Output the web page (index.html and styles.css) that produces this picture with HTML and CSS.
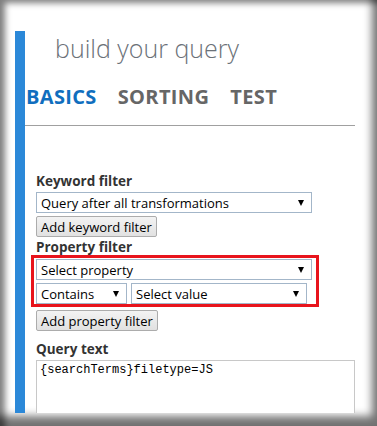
FILE: index.html
```html
<!DOCTYPE html>
<html lang="en">
<head>
    <meta charset="UTF-8">
    <meta name="viewport" content="width=device-width, initial-scale=1.0">
    <title>Build your query</title>
    <link rel="stylesheet" href="styles.css">
</head>
<body>
    <div class="frame">
        <div class="panel">
            <h1 class="title">build your query</h1>

            <!-- tabs of the query builder -->
            <div class="tabs">
                <span class="tab active">BASICS</span>
                <span class="tab">SORTING</span>
                <span class="tab">TEST</span>
            </div>
            <hr class="divider">

            <div class="form">
                <label class="label">Keyword filter</label>
                <div class="select wide">Query after all transformations<span class="arrow"></span></div>
                <button class="btn">Add keyword filter</button>

                <label class="label label-after">Property filter</label>
                <div class="highlight">
                    <div class="select wide">Select property<span class="arrow"></span></div>
                    <div class="row">
                        <div class="select operator">Contains<span class="arrow"></span></div>
                        <div class="select value">Select value<span class="arrow"></span></div>
                    </div>
                </div>
                <button class="btn">Add property filter</button>

                <label class="label label-query">Query text</label>
                <textarea class="query">{searchTerms}filetype=JS</textarea>
            </div>
        </div>
    </div>
</body>
</html>
```

FILE: styles.css
```css
body {
    margin: 0;
    padding: 0;
    font-family: "Open Sans", Arial, sans-serif;
    background-color: #fff;
}
.frame {
    width: 377px;
    height: 426px;
    box-sizing: border-box;
    padding: 31px 0 0 15px;
    background-color: #fff;
    overflow: hidden;
    box-shadow: inset 6px 4px 6px -1px rgba(0, 0, 0, 0.5),
                inset -7px -12px 8px -2px rgba(0, 0, 0, 0.55);
}
.panel {
    height: 382px;
    border-left: 10px solid #2b88d8;
    overflow: hidden;
}
.title {
    margin: 2px 0 0 30px;
    font-size: 25px;
    font-weight: 300;
    line-height: 30px;
    color: #6b7178;
}
.tabs {
    display: flex;
    margin-top: 22px;
    padding-left: 1px;
    line-height: 24px;
}
.tab {
    font-size: 20px;
    font-weight: bold;
    letter-spacing: 0.35px;
    color: #666;
    margin-right: 21px;
}
.tab.active {
    color: #106ebe;
}
.divider {
    width: 330px;
    margin: 16px 0 0 0;
    border: 0;
    border-top: 1px solid #a0a0a0;
}
.form {
    margin-left: 11px;
}
.label {
    display: block;
    margin-top: 47px;
    font-size: 13.5px;
    font-weight: bold;
    line-height: 16px;
    color: #333;
}
.label.label-after {
    margin-top: 2px;
}
.label.label-query {
    margin-top: 10px;
}
.select {
    display: flex;
    align-items: center;
    justify-content: space-between;
    box-sizing: border-box;
    height: 21px;
    margin-top: 3px;
    padding: 0 7px 0 4px;
    border: 1px solid #a3b6c9;
    font-size: 13px;
    color: #000;
    background-color: #fff;
}
.select.wide {
    width: 276px;
}
.arrow {
    width: 0;
    height: 0;
    border-left: 3px solid transparent;
    border-right: 3px solid transparent;
    border-top: 6px solid #000;
}
.btn {
    display: block;
    box-sizing: border-box;
    height: 21px;
    margin-top: 3px;
    padding: 0 4px;
    border: 1px solid #acacac;
    border-radius: 2px;
    background: linear-gradient(#f3f3f3, #e1e1e1);
    font-family: "Open Sans", Arial, sans-serif;
    font-size: 13px;
    line-height: 18px;
    color: #000;
}
.highlight {
    width: 288px;
    box-sizing: border-box;
    margin-left: -5px;
    padding: 1px 0 0 2px;
    height: 52px;
    border: 3px solid #e8141c;
}
.highlight .select.wide {
    margin-top: 0;
}
.row {
    display: flex;
    gap: 4px;
    margin-top: 3px;
}
.row .select {
    margin-top: 0;
}
.select.operator {
    width: 91px;
}
.select.value {
    width: 176px;
}
.query {
    display: block;
    box-sizing: border-box;
    width: 319px;
    height: 110px;
    margin-top: 3px;
    padding: 2px 3px;
    border: 1px solid #c8c8c8;
    font-family: "Liberation Mono", monospace;
    font-size: 12px;
    line-height: 15px;
    color: #000;
    resize: none;
}
```
